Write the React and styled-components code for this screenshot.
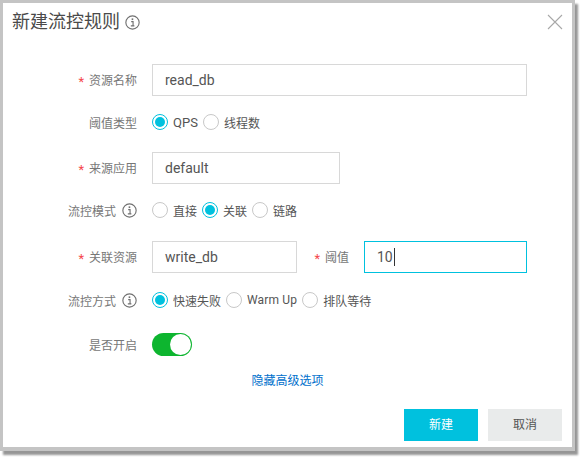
import React from 'react';
import styled, { createGlobalStyle } from 'styled-components';

const GlobalStyle = createGlobalStyle`
  html, body {
    margin: 0;
    padding: 0;
    background: #fff;
    font-family: Roboto, "Noto Sans CJK SC", sans-serif;
  }
`;

const Page = styled.div`
  width: 585px;
  height: 461px;
  overflow: hidden;
`;

const Dialog = styled.div`
  box-sizing: border-box;
  width: 575px;
  height: 451px;
  background: #fff;
  border: 3px solid #c4c4c4;
  border-bottom-width: 4px;
  box-shadow: 3px 4px 2px #969696;
  display: flex;
  flex-direction: column;
`;

const Header = styled.div`
  display: flex;
  align-items: center;
  justify-content: space-between;
  height: 38px;
  padding: 0 9px 0 9px;
`;

const TitleGroup = styled.div`
  display: flex;
  align-items: center;
  gap: 5px;
`;

const Title = styled.span`
  font-size: 18px;
  line-height: 38px;
  color: #4a4a4a;
`;

const Form = styled.div`
  display: flex;
  flex-direction: column;
  padding-top: 23px;
`;

const Row = styled.div`
  display: flex;
  align-items: center;
  height: ${p => p.$height}px;
  margin-bottom: ${p => p.$gap || 0}px;
`;

const Label = styled.div`
  flex: none;
  display: flex;
  align-items: center;
  justify-content: flex-end;
  gap: 6px;
  width: ${p => p.$width || 134}px;
  margin-right: 15px;
  font-size: 12px;
  color: #777;
  white-space: nowrap;
`;

const RequiredLabel = styled(Label)`
  gap: 5px;
  padding-bottom: 2px;
`;

const Required = styled.span`
  color: #f5474b;
  font-size: 13px;
  padding-top: 5px;
`;

const Field = styled.div`
  box-sizing: border-box;
  width: ${p => p.$width}px;
  height: 32px;
  display: flex;
  align-items: center;
  padding: 0 12px;
  border: 1px solid ${p => (p.$focused ? '#00c1de' : '#d8d8d8')};
  font-size: 14px;
  color: #555;
`;

const Caret = styled.span`
  width: 1px;
  height: 18px;
  margin-left: 1px;
  background: #333;
`;

const RadioGroup = styled.div`
  display: flex;
  align-items: center;
  gap: 5px;
  font-size: 12px;
  color: #555;
`;

const RadioText = styled.span`
  font-size: ${p => (p.$large ? 13 : 12)}px;
  letter-spacing: ${p => (p.$tracked ? 0.15 : 0)}px;
`;

const RadioCircle = styled.span`
  box-sizing: border-box;
  width: 16px;
  height: 16px;
  border-radius: 50%;
  border: 1px solid ${p => (p.$checked ? '#00c1de' : '#c8c8c8')};
  display: flex;
  align-items: center;
  justify-content: center;
  margin-top: -1px;

  &::after {
    content: '';
    display: ${p => (p.$checked ? 'block' : 'none')};
    width: 10px;
    height: 10px;
    border-radius: 50%;
    background: #00c1de;
  }
`;

const Switch = styled.div`
  box-sizing: border-box;
  width: 40px;
  height: 23px;
  border-radius: 12px;
  background: #0db52f;
  padding: 1px;
  display: flex;
  justify-content: flex-end;

  &::after {
    content: '';
    width: 21px;
    height: 21px;
    border-radius: 50%;
    background: #fff;
  }
`;

const ToggleRow = styled.div`
  display: flex;
  justify-content: center;
  margin-top: 16px;
`;

const ToggleLink = styled.a`
  font-size: 12px;
  line-height: 18px;
  color: #0070cc;
`;

const Footer = styled.div`
  display: flex;
  justify-content: flex-end;
  gap: 10px;
  margin-top: 19px;
  padding-right: 10px;
`;

const Button = styled.button`
  width: 74px;
  height: 32px;
  padding: 0 0 3px;
  border: none;
  font-family: inherit;
  font-size: 12px;
  color: ${p => (p.$primary ? '#fff' : '#555')};
  background: ${p => (p.$primary ? '#00c1de' : '#e9ebeb')};
`;

const InfoIcon = () => (
  <svg width="15" height="15" viewBox="0 0 16 16" fill="none" style={{ flex: 'none' }}>
    <circle cx="8" cy="8" r="7.1" stroke="#707070" strokeWidth="1.2" />
    <path d="M6.6 7h2v4.4M6.2 11.6h3.8" stroke="#707070" strokeWidth="1.2" />
    <rect x="7.1" y="3.6" width="1.7" height="1.8" fill="#707070" />
  </svg>
);

const CloseIcon = () => (
  <svg width="16" height="16" viewBox="0 0 16 16" fill="none">
    <path d="M1 1l14 14M15 1L1 15" stroke="#a8a8a8" strokeWidth="1.1" />
  </svg>
);

const Radio = ({ checked, large, tracked, children }) => (
  <>
    <RadioCircle $checked={checked} />
    <RadioText $large={large} $tracked={tracked}>{children}</RadioText>
  </>
);

export default function App() {
  return (
    <Page>
      <GlobalStyle />
      <Dialog>
        <Header>
          <TitleGroup>
            <Title>新建流控规则</Title>
            <InfoIcon />
          </TitleGroup>
          <CloseIcon />
        </Header>
        <Form>
          <Row $height={32} $gap={16}>
            <RequiredLabel><Required>*</Required>资源名称</RequiredLabel>
            <Field $width={375}>read_db</Field>
          </Row>
          <Row $height={20} $gap={20}>
            <Label>阈值类型</Label>
            <RadioGroup>
              <Radio checked large>QPS</Radio>
              <Radio>线程数</Radio>
            </RadioGroup>
          </Row>
          <Row $height={32} $gap={16}>
            <RequiredLabel><Required>*</Required>来源应用</RequiredLabel>
            <Field $width={188}>default</Field>
          </Row>
          <Row $height={20} $gap={21}>
            <Label>流控模式<InfoIcon /></Label>
            <RadioGroup>
              <Radio>直接</Radio>
              <Radio checked>关联</Radio>
              <Radio>链路</Radio>
            </RadioGroup>
          </Row>
          <Row $height={32} $gap={17}>
            <RequiredLabel><Required>*</Required>关联资源</RequiredLabel>
            <Field $width={145}>write_db</Field>
            <RequiredLabel $width={52}><Required>*</Required>阈值</RequiredLabel>
            <Field $width={163} $focused>10<Caret /></Field>
          </Row>
          <Row $height={20} $gap={23}>
            <Label>流控方式<InfoIcon /></Label>
            <RadioGroup>
              <Radio checked>快速失败</Radio>
              <Radio tracked>Warm Up</Radio>
              <Radio>排队等待</Radio>
            </RadioGroup>
          </Row>
          <Row $height={23}>
            <Label>是否开启</Label>
            <Switch />
          </Row>
          <ToggleRow>
            <ToggleLink>隐藏高级选项</ToggleLink>
          </ToggleRow>
        </Form>
        <Footer>
          <Button $primary>新建</Button>
          <Button>取消</Button>
        </Footer>
      </Dialog>
    </Page>
  );
}
